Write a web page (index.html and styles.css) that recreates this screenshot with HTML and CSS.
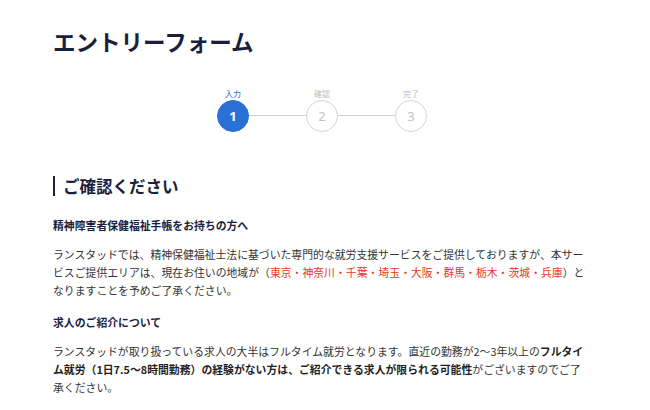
FILE: index.html
```html
<!DOCTYPE html>
<html lang="ja">
<head>
<meta charset="utf-8">
<link rel="stylesheet" href="styles.css">
</head>
<body>
<div class="page">
  <h1 class="title">エントリーフォーム</h1>
  <div class="stepper">
    <div class="step active">
      <div class="step-label">入力</div>
      <div class="step-circle">1</div>
    </div>
    <div class="step-line"></div>
    <div class="step">
      <div class="step-label">確認</div>
      <div class="step-circle">2</div>
    </div>
    <div class="step-line"></div>
    <div class="step">
      <div class="step-label">完了</div>
      <div class="step-circle">3</div>
    </div>
  </div>
  <h2 class="section-title">ご確認ください</h2>
  <h3 class="sub-title first">精神障害者保健福祉手帳をお持ちの方へ</h3>
  <p class="text">ランスタッドでは、精神保健福祉士法に基づいた専門的な就労支援サービスをご提供しておりますが、本サービスご提供エリアは、現在お住いの地域が（<span class="red">東京・神奈川・千葉・埼玉・大阪・群馬・栃木・茨城・兵庫</span>）となりますことを予めご了承ください。</p>
  <h3 class="sub-title">求人のご紹介について</h3>
  <p class="text">ランスタッドが取り扱っている求人の大半はフルタイム就労となります。直近の勤務が2〜3年以上の<b>フルタイム就労（1日7.5〜8時間勤務）の経験がない方は、ご紹介できる求人が限られる可能性</b>がございますのでご了承ください。</p>
</div>
</body>
</html>
```
FILE: styles.css
```css
* { box-sizing: border-box; }
html, body { margin: 0; padding: 0; background: #fff; }
body {
  font-family: "Noto Sans CJK JP", "Noto Sans", sans-serif;
  color: #333;
}
.page {
  padding: 24px 0 0 53px;
  width: 600px;
}
.title {
  margin: 0;
  font-size: 22.5px;
  line-height: 34px;
  font-weight: 700;
  color: #1b1f3d;
}
.stepper {
  display: flex;
  align-items: flex-end;
  margin-top: 31px;
  padding-left: 164px;
}
.step {
  display: flex;
  flex-direction: column;
  align-items: center;
  width: 32px;
}
.step-label {
  font-size: 8px;
  line-height: 10px;
  color: #bdbdbd;
  margin-bottom: 1px;
  white-space: nowrap;
}
.step-circle {
  width: 32px;
  height: 32px;
  border-radius: 50%;
  border: 1.5px solid #d6d6d6;
  color: #c4c4c4;
  font-size: 13px;
  display: flex;
  align-items: center;
  justify-content: center;
  font-family: "Noto Sans", sans-serif;
}
.step.active .step-label { color: #2a6fd4; }
.step.active .step-circle {
  background: #2b70d6;
  border-color: #2b70d6;
  color: #fff;
  font-weight: 700;
}
.step-line {
  width: 57px;
  height: 1px;
  background: #d0d0d0;
  margin-bottom: 16px;
}
.section-title {
  margin: 44px 0 0;
  font-size: 16.5px;
  line-height: 20px;
  font-weight: 700;
  color: #1b1f3d;
  border-left: 2px solid #1b1f3d;
  padding-left: 8px;
}
.sub-title {
  margin: 14px 0 0;
  font-size: 10.85px;
  line-height: 18px;
  font-weight: 700;
  color: #1b1f3d;
}
.sub-title.first { margin-top: 20px; }
.text {
  margin: 11px 0 0;
  width: 536px;
  font-size: 10.85px;
  line-height: 18px;
  color: #333;
}
.text b { font-weight: 700; color: #1f1f1f; }
.red { color: #e5371d; }
```
